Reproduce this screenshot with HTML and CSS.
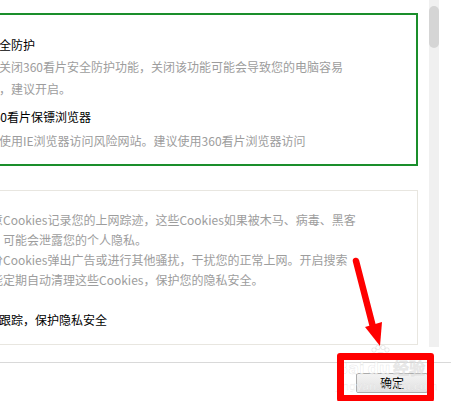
FILE: index.html
```html
<!DOCTYPE html>
<html lang="zh-CN">

<head>
    <meta charset="UTF-8">
    <meta name="viewport" content="width=device-width, initial-scale=1.0">
    <title>设置</title>
    <link rel="stylesheet" href="styles.css">
</head>

<body>
    <div class="dialog">
        <div class="main">
            <div class="scroll-area">
                <div class="panel">

                    <div class="box box-green">
                        <div class="item-title">安全防护</div>
                        <div class="item-desc">
                            <p>若关闭360看片安全防护功能，关闭该功能可能会导致您的电脑容易</p>
                            <p>击，建议开启。</p>
                        </div>
                        <div class="item-title item-next">360看片保镖浏览器</div>
                        <div class="item-desc item-desc-tight">
                            <p>勿使用IE浏览器访问风险网站。建议使用360看片浏览器访问</p>
                        </div>
                    </div>

                    <div class="box box-plain">
                        <div class="item-desc item-desc-small">
                            <p>恶意Cookies记录您的上网踪迹，这些Cookies如果被木马、病毒、黑客</p>
                            <p>用，可能会泄露您的个人隐私。</p>
                            <p>部分Cookies弹出广告或进行其他骚扰，干扰您的正常上网。开启搜索</p>
                            <p>功能定期自动清理这些Cookies，保护您的隐私安全。</p>
                        </div>
                        <div class="opt-row">防跟踪，保护隐私安全</div>
                    </div>

                </div>
            </div>
            <div class="scrollbar">
                <div class="scroll-thumb"></div>
            </div>
        </div>

        <div class="footer">
            <button class="btn-ok">确定</button>
        </div>
    </div>

    <!-- annotation layer -->
    <div class="watermark">
        <svg class="paw" width="20" height="16" viewBox="0 0 20 16">
            <circle cx="4" cy="5" r="2.2" />
            <circle cx="8" cy="2.5" r="2.2" />
            <circle cx="13" cy="2.5" r="2.2" />
            <circle cx="17" cy="5" r="2.2" />
            <ellipse cx="10.5" cy="11" rx="4.5" ry="3.5" />
        </svg>
        <div class="wm-logo">Bai<span class="wm-du">du</span>经验</div>
        <div class="wm-url">jingyan.baidu.com</div>
    </div>

    <div class="mark-box"></div>

    <svg class="mark-arrow" width="451" height="401" viewBox="0 0 451 401">
        <line x1="356" y1="261" x2="373" y2="327" stroke="#ff0000" stroke-width="6.5" stroke-linecap="round" />
        <polygon points="365,327 382,322 380,346" fill="#ff0000" />
    </svg>
</body>

</html>
```

FILE: styles.css
```css
body {
    margin: 0;
    padding: 0;
    background: #ffffff;
    font-family: "Noto Sans CJK SC", "Noto Sans", sans-serif;
    font-size: 12px;
    overflow: hidden;
}

.dialog {
    width: 451px;
    height: 401px;
    display: flex;
    flex-direction: column;
}

.main {
    height: 347px;
    display: flex;
    overflow: hidden;
}

.scroll-area {
    width: 429px;
    overflow: hidden;
}

.panel {
    margin-left: -40px;
    /* dialog is cropped on the left */
    padding-top: 13px;
}

.box {
    margin-right: 11px;
}

.box-green {
    border: 2px solid #1a8e2b;
    padding: 20px 0 12px 25px;
}

.box-plain {
    border: 1px solid #e8e6e0;
    margin-top: 24px;
    padding: 19px 0 14px 18px;
}

.item-title {
    line-height: 20px;
    color: #000000;
    white-space: nowrap;
}

.item-next {
    margin-top: 7px;
}

.item-desc {
    margin-top: 1px;
    color: #9d9d9d;
    line-height: 22px;
    white-space: nowrap;
}

.item-desc p {
    margin: 0;
}

.item-desc-tight {
    margin-top: 3px;
}

.item-desc-small {
    margin-top: 0;
    line-height: 20px;
}

.opt-row {
    margin-top: 20px;
    padding-left: 8px;
    line-height: 20px;
    color: #000000;
    white-space: nowrap;
}

.scrollbar {
    width: 10px;
    background: #f0f0f0;
    margin-right: 12px;
    padding-top: 6px;
}

.scroll-thumb {
    height: 42px;
    background: #d5d5d5;
    border-radius: 5px;
}

.footer {
    margin-top: 15px;
    border-top: 1px solid #d9d9d9;
    padding: 10px 23px 0 0;
    display: flex;
    justify-content: flex-end;
}

.btn-ok {
    width: 72px;
    height: 20px;
    padding: 0;
    font-family: "Noto Sans CJK SC", sans-serif;
    font-size: 12px;
    line-height: 18px;
    color: #000000;
    background: linear-gradient(#f3f3f3, #e1e1e1);
    border: 1px solid #acacac;
    border-radius: 2px;
}

/* watermark over the footer */
.watermark {
    position: absolute;
    left: 336px;
    top: 345px;
    width: 96px;
    pointer-events: none;
}

.paw {
    display: block;
    margin-left: 34px;
    fill: rgba(255, 255, 255, 0.6);
    stroke: rgba(170, 170, 170, 0.25);
    stroke-width: 1;
}

.wm-logo {
    font-family: "DejaVu Sans", sans-serif;
    font-size: 16px;
    font-weight: bold;
    line-height: 16px;
    color: rgba(255, 255, 255, 0.7);
    -webkit-text-stroke: 0.5px rgba(170, 170, 170, 0.3);
    white-space: nowrap;
}

.wm-du {
    margin: 0 3px;
}

.wm-url {
    margin-top: 4px;
    font-family: "DejaVu Sans", sans-serif;
    font-size: 11px;
    line-height: 12px;
    color: rgba(255, 255, 255, 0.7);
    -webkit-text-stroke: 0.3px rgba(170, 170, 170, 0.3);
    white-space: nowrap;
}

/* red annotation */
.mark-box {
    position: absolute;
    left: 337px;
    top: 353px;
    width: 83px;
    height: 35px;
    border: 7px solid #ff0000;
    border-radius: 3px;
}

.mark-arrow {
    position: absolute;
    left: 0;
    top: 0;
}
```
